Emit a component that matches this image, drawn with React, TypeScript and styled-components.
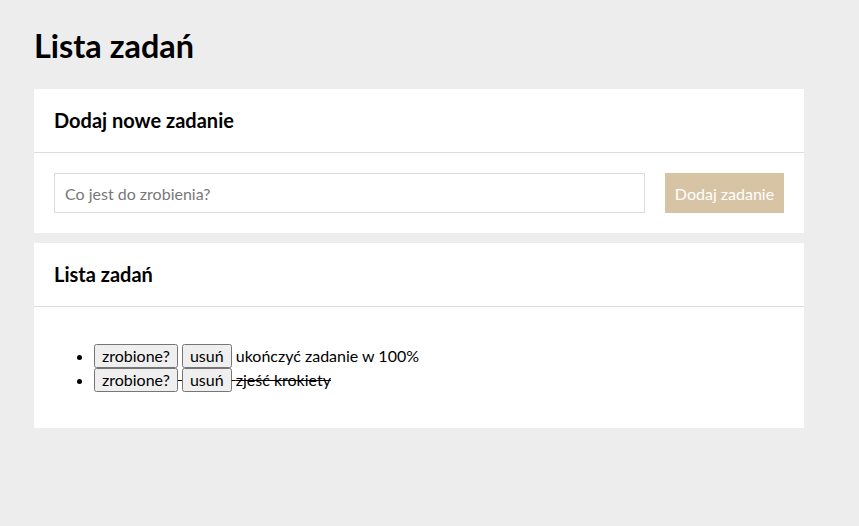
import React, { useState } from "react";
import styled, { createGlobalStyle } from "styled-components";

const Global = createGlobalStyle`
  html, body { margin: 0; padding: 0; }
  body {
    background: #eeeded;
    font-family: Lato, "Open Sans", sans-serif;
    color: #000;
    min-height: 526px;
  }
`;

const Page = styled.main`
  padding: 22px 34px 20px;
  width: 770px;
`;

const Title = styled.h1`
  margin: 0 0 19px;
  font-size: 32.4px;
  font-weight: 700;
  line-height: 48px;
`;

const Card = styled.section`
  background: #fff;
  margin-bottom: 10px;
`;

const CardHeader = styled.h2`
  margin: 0;
  padding: 20px;
  font-size: 20px;
  font-weight: 700;
  line-height: 23px;
  border-bottom: 1px solid #dddddd;
`;

const CardBody = styled.div`
  padding: 20px;
`;

const Form = styled.form`
  display: flex;
  gap: 20px;
`;

const Input = styled.input`
  flex: 1;
  height: 40px;
  box-sizing: border-box;
  border: 1px solid #dcdcdc;
  padding: 0 10px;
  font-family: inherit;
  font-size: 16px;
  outline: none;
  &::placeholder { color: #777; }
`;

const AddButton = styled.button`
  height: 40px;
  width: 119px;
  border: none;
  background: #d7c4a5;
  color: #fff;
  font-family: inherit;
  font-size: 16px;
  padding: 0;
`;

const List = styled.ul`
  margin: 17px 0 16px;
  padding-left: 40px;
`;

const Item = styled.li<{ $done: boolean }>`
  font-size: 16px;
  line-height: 24px;
  text-decoration: ${(p) => (p.$done ? "line-through" : "none")};
`;

const SmallButton = styled.button`
  font-family: inherit;
  font-size: 16px;
  line-height: 18px;
  padding: 1px 6px;
`;

export default function App() {
  const [tasks] = useState([
    { name: "ukończyć zadanie w 100%", done: false },
    { name: "zjeść krokiety", done: true },
  ]);
  return (
    <>
      <Global />
      <Page>
        <Title>Lista zadań</Title>
        <Card>
          <CardHeader>Dodaj nowe zadanie</CardHeader>
          <CardBody>
            <Form onSubmit={(e) => e.preventDefault()}>
              <Input placeholder="Co jest do zrobienia?" />
              <AddButton type="submit">Dodaj zadanie</AddButton>
            </Form>
          </CardBody>
        </Card>
        <Card>
          <CardHeader>Lista zadań</CardHeader>
          <CardBody>
            <List>
              {tasks.map((t) => (
                <Item key={t.name} $done={t.done}>
                  <SmallButton>zrobione?</SmallButton> <SmallButton>usuń</SmallButton> {t.name}
                </Item>
              ))}
            </List>
          </CardBody>
        </Card>
      </Page>
    </>
  );
}
